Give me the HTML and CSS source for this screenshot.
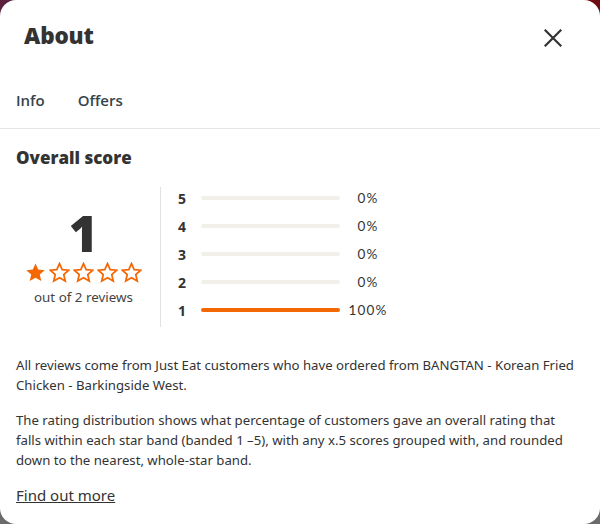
FILE: index.html
```html
<!DOCTYPE html>
<html>
<head>
<meta charset="utf-8">
<link rel="stylesheet" href="styles.css">
</head>
<body>
<div class="modal">
  <header class="head">
    <h1 class="title">About</h1>
    <button class="close" aria-label="Close">
      <svg width="18" height="18" viewBox="0 0 18 18"><path d="M1.5 1.5 L16.5 16.5 M16.5 1.5 L1.5 16.5" stroke="#333" stroke-width="2.2" stroke-linecap="square" fill="none"/></svg>
    </button>
  </header>
  <nav class="tabs">
    <span class="tab">Info</span>
    <span class="tab">Offers</span>
  </nav>
  <section class="content">
    <h2 class="subtitle">Overall score</h2>
    <div class="score">
      <div class="summary">
        <div class="big">1</div>
        <div class="stars">
          <svg class="star" viewBox="0 0 24 24"><path d="M12 1.8l3.1 6.9 7.4.7-5.6 5 1.7 7.4L12 17.9l-6.6 3.9 1.7-7.4-5.6-5 7.4-.7z" fill="#f36805"/></svg>
          <svg class="star" viewBox="0 0 24 24"><path d="M12 1.8l3.1 6.9 7.4.7-5.6 5 1.7 7.4L12 17.9l-6.6 3.9 1.7-7.4-5.6-5 7.4-.7z" fill="none" stroke="#f36805" stroke-width="2" stroke-linejoin="miter"/></svg>
          <svg class="star" viewBox="0 0 24 24"><path d="M12 1.8l3.1 6.9 7.4.7-5.6 5 1.7 7.4L12 17.9l-6.6 3.9 1.7-7.4-5.6-5 7.4-.7z" fill="none" stroke="#f36805" stroke-width="2" stroke-linejoin="miter"/></svg>
          <svg class="star" viewBox="0 0 24 24"><path d="M12 1.8l3.1 6.9 7.4.7-5.6 5 1.7 7.4L12 17.9l-6.6 3.9 1.7-7.4-5.6-5 7.4-.7z" fill="none" stroke="#f36805" stroke-width="2" stroke-linejoin="miter"/></svg>
          <svg class="star" viewBox="0 0 24 24"><path d="M12 1.8l3.1 6.9 7.4.7-5.6 5 1.7 7.4L12 17.9l-6.6 3.9 1.7-7.4-5.6-5 7.4-.7z" fill="none" stroke="#f36805" stroke-width="2" stroke-linejoin="miter"/></svg>
        </div>
        <div class="count">out of 2 reviews</div>
      </div>
      <div class="dist">
        <div class="row"><span class="lbl">5</span><span class="bar"><span class="fill" style="width:0%"></span></span><span class="pct">0%</span></div>
        <div class="row"><span class="lbl">4</span><span class="bar"><span class="fill" style="width:0%"></span></span><span class="pct">0%</span></div>
        <div class="row"><span class="lbl">3</span><span class="bar"><span class="fill" style="width:0%"></span></span><span class="pct">0%</span></div>
        <div class="row"><span class="lbl">2</span><span class="bar"><span class="fill" style="width:0%"></span></span><span class="pct">0%</span></div>
        <div class="row"><span class="lbl">1</span><span class="bar"><span class="fill" style="width:100%"></span></span><span class="pct">100%</span></div>
      </div>
    </div>
    <p class="text">All reviews come from Just Eat customers who have ordered from BANGTAN - Korean Fried Chicken - Barkingside West.</p>
    <p class="text">The rating distribution shows what percentage of customers gave an overall rating that falls within each star band (banded 1 –5), with any x.5 scores grouped with, and rounded down to the nearest, whole-star band.</p>
    <a class="more" href="#">Find out more</a>
  </section>
</div>
</body>
</html>
```

FILE: styles.css
```css
* { box-sizing: border-box; }
html, body { margin: 0; height: 100%; }
body {
  background:
    linear-gradient(180deg, rgba(107,107,107,0) 35%, #6b6b6b 75%),
    linear-gradient(90deg, #5b2240 0%, #6a1a2a 50%, #6e0b12 100%);
  font-family: "Noto Sans", sans-serif;
  color: #333;
  overflow: hidden;
}
.modal {
  width: 600px;
  height: 524px;
  background: #fff;
  border-radius: 16px;
  overflow: hidden;
}
.head {
  display: flex;
  justify-content: space-between;
  align-items: flex-start;
  padding: 20px 38px 0 24px;
  height: 72px;
}
.title {
  margin: 0;
  font-family: "Open Sans", sans-serif;
  font-weight: 800;
  font-size: 22.5px;
  line-height: 32px;
  color: #333;
  letter-spacing: -0.2px;
}
.close {
  border: 0;
  background: none;
  padding: 0;
  margin-top: 9px;
  width: 18px;
  height: 18px;
  display: flex;
}
.tabs {
  display: flex;
  gap: 33px;
  padding: 0 16px;
  height: 57px;
  align-items: center;
  border-bottom: 1px solid #e5e5e5;
}
.tab {
  font-family: "Open Sans", sans-serif;
  font-weight: 600;
  font-size: 15px;
  color: #35444b;
}
.content {
  padding: 17px 20px 0 16px;
}
.subtitle {
  margin: 0;
  font-family: "Open Sans", sans-serif;
  font-weight: 800;
  font-size: 17px;
  line-height: 24px;
  color: #333;
}
.score {
  display: flex;
  margin-top: 17px;
}
.summary {
  width: 145px;
  padding-right: 9px;
  border-right: 1px solid #e2e2e2;
  display: flex;
  flex-direction: column;
  align-items: center;
  padding-top: 22px;
  height: 140px;
}
.big {
  font-family: "Open Sans", sans-serif;
  font-weight: 800;
  font-size: 50px;
  line-height: 48px;
  color: #333;
}
.stars {
  display: flex;
  gap: 3px;
  margin-top: 5px;
}
.star { width: 21px; height: 21px; display: block; }
.count {
  margin-top: 5px;
  font-size: 13.4px;
  color: #444;
}
.dist {
  padding-left: 17px;
  padding-top: 1px;
  display: flex;
  flex-direction: column;
  gap: 8px;
}
.row {
  display: flex;
  align-items: center;
  height: 20px;
}
.lbl {
  width: 23px;
  font-family: "Open Sans", sans-serif;
  font-weight: 700;
  font-size: 14px;
  color: #333;
}
.bar {
  width: 139px;
  height: 4px;
  border-radius: 2px;
  background: #f3f0eb;
  display: flex;
}
.fill { height: 100%; background: #f36805; border-radius: 2px; }
.pct {
  width: 44px;
  margin-left: 6px;
  text-align: center;
  font-family: "Lato", sans-serif;
  font-size: 13.5px;
  letter-spacing: 1.2px;
  color: #333;
}
.text {
  margin: 28px 0 0;
  font-size: 13.2px;
  line-height: 20px;
  color: #333;
}
.text + .text { margin-top: 15px; }
.more {
  display: inline-block;
  margin-top: 15px;
  font-size: 15px;
  color: #333;
  text-decoration: underline;
}
```
